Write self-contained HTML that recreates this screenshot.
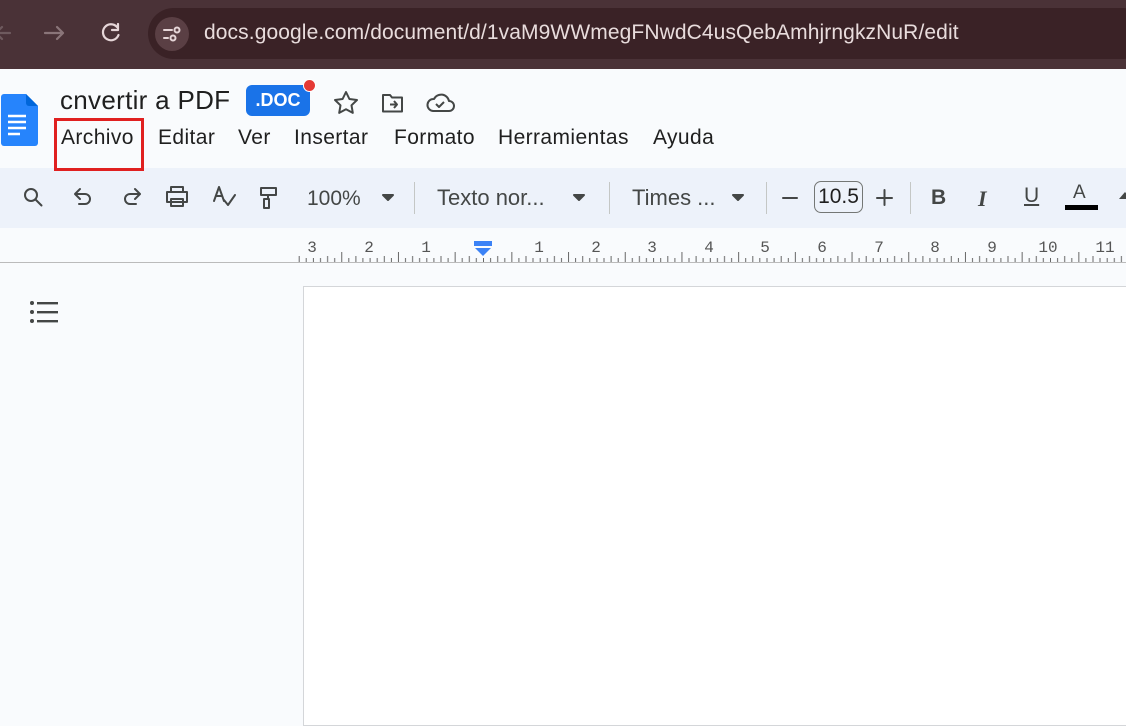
<!DOCTYPE html>
<html><head><meta charset="utf-8"><style>
*{margin:0;padding:0;box-sizing:border-box}
body{width:1126px;height:712px;overflow:hidden;background:#f9fbfd;font-family:"Liberation Sans",sans-serif;position:relative}
.abs{position:absolute}
.bar{left:0;top:0;width:1126px;height:69px;background:#4a3237}
.url{left:148px;top:8px;width:1000px;height:51px;border-radius:26px;background:#3a2226}
.urltxt{left:204px;top:21px;color:#e8dcdc;font-size:21px;letter-spacing:0.1px}
.menu span{position:absolute;top:126px;font-size:21px;letter-spacing:0.4px;color:#1f1f1f}
.tb{left:-30px;top:168px;width:1200px;height:60px;border-radius:28px;background:#edf2fa}
.t{position:absolute;font-size:21px;color:#444746}
.sep{position:absolute;top:182px;width:1px;height:32px;background:#c4c7c5}
</style></head><body>
<div class="abs bar"></div>
<div class="abs url"></div>
<svg class="abs" style="left:0;top:0" width="200" height="69" fill="none" stroke-linecap="round" stroke-linejoin="round">
<path d="M10 33H-4M2 27l-6 6 6 6" stroke="#6e5a5e" stroke-width="2.2"/>
<path d="M45 33h18M57 27l6 6-6 6" stroke="#8a7579" stroke-width="2.2"/>
<path d="M117 27a8 8 0 1 0 1.5 8M118 24v6h-6" stroke="#e6d6d8" stroke-width="2.2"/>
<circle cx="172" cy="34" r="17" fill="#5a3f44" stroke="none"/>
<path d="M164 30h8M164 38h4" stroke="#e6d6d8" stroke-width="2"/>
<circle cx="177" cy="30" r="2.5" stroke="#e6d6d8" stroke-width="2"/>
<circle cx="173" cy="38" r="2.5" stroke="#e6d6d8" stroke-width="2"/>
</svg>
<div class="abs urltxt">docs.google.com/document/d/1vaM9WWmegFNwdC4usQebAmhjrngkzNuR/edit</div>

<svg class="abs" style="left:0;top:92px" width="40" height="55">
<path d="M4 2h22l12 12v37a3 3 0 0 1-3 3H4a3 3 0 0 1-3-3V5a3 3 0 0 1 3-3z" fill="#2684fc"/>
<path d="M26 2v9a3 3 0 0 0 3 3h9z" fill="#0066da"/>
<path d="M8 24h18M8 30h18M8 36h18M8 42h12" stroke="#fff" stroke-width="2.6"/>
</svg>
<div class="abs" style="left:60px;top:85px;font-size:26px;letter-spacing:0.3px;color:#1f1f1f">cnvertir a PDF</div>
<div class="abs" style="left:246px;top:85px;width:64px;height:31px;border-radius:6px;background:#1a73e8;color:#fff;font-size:18px;font-weight:bold;text-align:center;line-height:31px">.DOC</div>
<div class="abs" style="left:303px;top:79px;width:13px;height:13px;border-radius:50%;background:#e53935;border:1.5px solid #fff"></div>
<svg class="abs" style="left:330px;top:88px" width="135" height="30" fill="none" stroke="#444746" stroke-width="2" stroke-linejoin="round">
<path d="M16 4l3.4 7 7.6 1-5.5 5.3 1.3 7.6L16 21.3 9.2 24.9l1.3-7.6L5 12l7.6-1z"/>
<path d="M53 7h7l2 2.5h10v14H53z M60 16.5h7M64 13l3 3.5-3 3.5"/>
<path d="M103 23h16a5 5 0 0 0 0-10 8 8 0 0 0-15-2 6 6 0 0 0-1 12z M106 16l3 3 5-5"/>
</svg>
<div class="menu">
<span style="left:61px">Archivo</span><span style="left:158px">Editar</span><span style="left:238px">Ver</span><span style="left:294px">Insertar</span><span style="left:394px">Formato</span><span style="left:498px">Herramientas</span><span style="left:653px">Ayuda</span>
</div>

<div class="abs tb"></div>
<div class="abs" style="left:54px;top:118px;width:90px;height:53px;border:3px solid #e02020;z-index:5"></div>
<svg class="abs" style="left:0;top:168px" width="1126" height="60" fill="none" stroke="#444746" stroke-width="2" stroke-linecap="round" stroke-linejoin="round">
<circle cx="31" cy="27" r="6"/><path d="M35.5 31.5l6 6"/>
<path d="M76 26h9a5 5 0 0 1 0 10h-6M80 21l-5 5 5 5"/>
<path d="M139 26h-9a5 5 0 0 0 0 10h6M135 21l5 5-5 5"/>
<path d="M171 24v-5h12v5M167 24h20v10h-20zM171 31h12v7h-12z"/>
<path d="M214 33l5-14 5 14M216 28h6M224 32l4 5 7-10"/>
<path d="M261 20h15v7h-15zM268 27v4h-4v9h5v-9"/>
<path d="M383 27l5 5 5-5z" fill="#444746"/>
<path d="M574 27l5 5 5-5z" fill="#444746"/>
<path d="M733 27l5 5 5-5z" fill="#444746"/>
<path d="M783 30h14M877 30h15M884.5 22v15"/>
</svg>
<div class="t" style="left:307px;top:187px">100%</div>
<div class="sep" style="left:414px"></div>
<div class="t" style="left:437px;top:185px;font-size:22px">Texto nor...</div>
<div class="sep" style="left:609px"></div>
<div class="t" style="left:632px;top:185px;font-size:22px">Times ...</div>
<div class="sep" style="left:766px"></div>
<div class="abs" style="left:814px;top:181px;width:49px;height:32px;border:1px solid #747775;border-radius:7px;font-size:21px;color:#1f1f1f;text-align:center;line-height:30px">10.5</div>
<div class="sep" style="left:910px"></div>
<div class="t" style="left:931px;top:186px;font-weight:bold;color:#444746">B</div>
<div class="t" style="left:978px;top:186px;font-style:italic;font-family:'Liberation Serif',serif;font-weight:bold;font-size:22px">I</div>
<div class="t" style="left:1024px;top:184px;text-decoration:underline">U</div>
<div class="t" style="left:1073px;top:182px;font-size:19px">A</div>
<div class="abs" style="left:1065px;top:205px;width:33px;height:5px;background:#000"></div>
<div class="abs" style="left:1119px;top:192px;width:0;height:0;border-left:6px solid transparent;border-right:6px solid transparent;border-bottom:7px solid #444746"></div>

<svg class="abs" style="left:0;top:230px" width="1126" height="36">
<defs><pattern id="p" patternUnits="userSpaceOnUse" x="483" y="0" width="56.7" height="36">
<g stroke="#666" stroke-width="1">
<line x1="0.5" y1="28" x2="0.5" y2="32"/><line x1="7.6" y1="28" x2="7.6" y2="32"/><line x1="14.7" y1="26" x2="14.7" y2="32"/><line x1="21.8" y1="28" x2="21.8" y2="32"/><line x1="28.85" y1="22" x2="28.85" y2="32"/><line x1="35.9" y1="28" x2="35.9" y2="32"/><line x1="43" y1="26" x2="43" y2="32"/><line x1="50" y1="28" x2="50" y2="32"/>
</g></pattern></defs>
<rect x="298" y="0" width="828" height="33" fill="url(#p)"/>
<line x1="0" y1="32.5" x2="1126" y2="32.5" stroke="#bbb"/>
<g font-family="Liberation Mono,monospace" font-size="16" fill="#555" text-anchor="middle">
<text x="312" y="22">3</text><text x="369" y="22">2</text><text x="426" y="22">1</text>
<text x="539" y="22">1</text><text x="596" y="22">2</text><text x="652" y="22">3</text><text x="709" y="22">4</text><text x="765" y="22">5</text><text x="822" y="22">6</text><text x="879" y="22">7</text><text x="935" y="22">8</text><text x="992" y="22">9</text><text x="1048" y="22">10</text><text x="1105" y="22">11</text>
</g>
<rect x="474" y="11" width="18" height="5" fill="#3b82f6"/><path d="M475 18h16l-8 8z" fill="#3b82f6"/>
</svg>

<svg class="abs" style="left:28px;top:300px" width="32" height="26" fill="#444746">
<circle cx="4" cy="3" r="2"/><circle cx="4" cy="12" r="2"/><circle cx="4" cy="21" r="2"/>
<rect x="9" y="2" width="21" height="2.4"/><rect x="9" y="11" width="21" height="2.4"/><rect x="9" y="20" width="21" height="2.4"/>
</svg>
<div class="abs" style="left:303px;top:286px;width:830px;height:440px;background:#fff;border:1px solid #d4d6d9"></div>
</body></html>
